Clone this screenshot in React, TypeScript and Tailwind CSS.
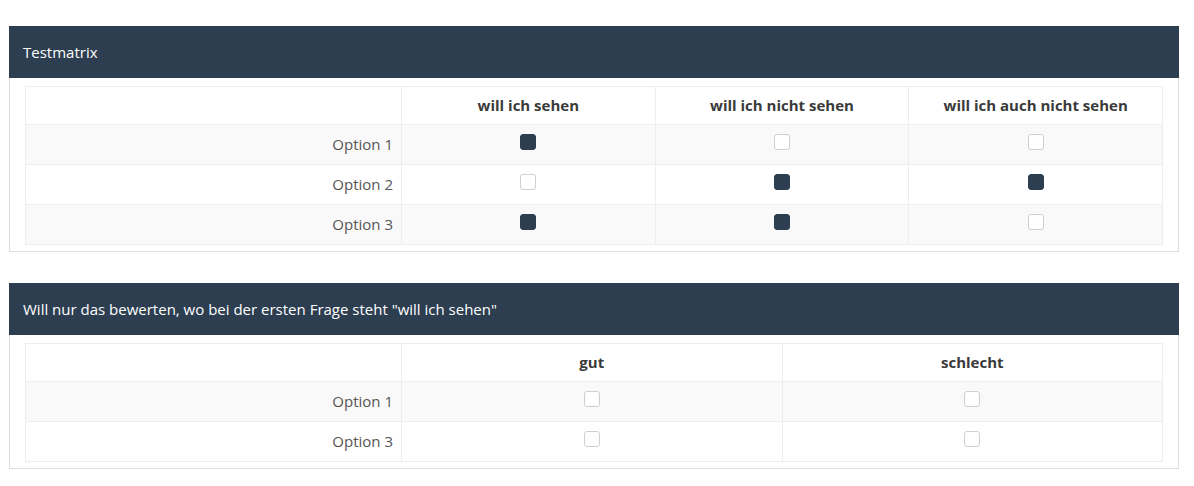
import React from 'react';

type Matrix = {
  title: string;
  columns: string[];
  rows: { label: string; checked: boolean[] }[];
};

const matrices: Matrix[] = [
  {
    title: 'Testmatrix',
    columns: ['will ich sehen', 'will ich nicht sehen', 'will ich auch nicht sehen'],
    rows: [
      { label: 'Option 1', checked: [true, false, false] },
      { label: 'Option 2', checked: [false, true, true] },
      { label: 'Option 3', checked: [true, true, false] },
    ],
  },
  {
    title: 'Will nur das bewerten, wo bei der ersten Frage steht "will ich sehen"',
    columns: ['gut', 'schlecht'],
    rows: [
      { label: 'Option 1', checked: [false, false] },
      { label: 'Option 3', checked: [false, false] },
    ],
  },
];

function Box({ checked }: { checked: boolean }) {
  return (
    <span
      className={`inline-block w-4 h-4 rounded-[3px] align-middle ${
        checked ? 'bg-[#2c3e50] border border-[#2c3e50]' : 'bg-white border border-[#cfcfcf]'
      }`}
    />
  );
}

function MatrixPanel({ m }: { m: Matrix }) {
  return (
    <section className="border border-[#dddddd] bg-white">
      <div className="bg-[#2c3e50] text-white h-[52px] flex items-center px-[14px] text-[15px] -mx-px -mt-px">
        {m.title}
      </div>
      <div className="px-[15px] pt-[8px] pb-[6px]">
        <table className="w-full table-fixed border-collapse text-[15px]">
          <colgroup>
            <col className="w-[376px]" />
            {m.columns.map((c) => (
              <col key={c} />
            ))}
          </colgroup>
          <thead>
            <tr className="h-[38px]">
              <th className="border border-[#eeeeee]" />
              {m.columns.map((c) => (
                <th key={c} className="border border-[#eeeeee] text-center font-bold text-[#3a3a3a]">
                  {c}
                </th>
              ))}
            </tr>
          </thead>
          <tbody>
            {m.rows.map((r, i) => (
              <tr key={r.label} className={`h-[40px] ${i % 2 === 0 ? 'bg-[#f9f9f9]' : 'bg-white'}`}>
                <td className="border border-[#eeeeee] text-right pr-[8px] text-[#555555]">{r.label}</td>
                {r.checked.map((ch, j) => (
                  <td key={j} className="border border-[#eeeeee] text-center pb-[8px]">
                    <Box checked={ch} />
                  </td>
                ))}
              </tr>
            ))}
          </tbody>
        </table>
      </div>
    </section>
  );
}

export default function App() {
  return (
    <div className="w-[1194px] h-[486px] bg-white font-['Open_Sans',sans-serif] pt-[26px] pl-[9px] pr-[15px] flex flex-col gap-[31px]">
      {matrices.map((m) => (
        <MatrixPanel key={m.title} m={m} />
      ))}
    </div>
  );
}
